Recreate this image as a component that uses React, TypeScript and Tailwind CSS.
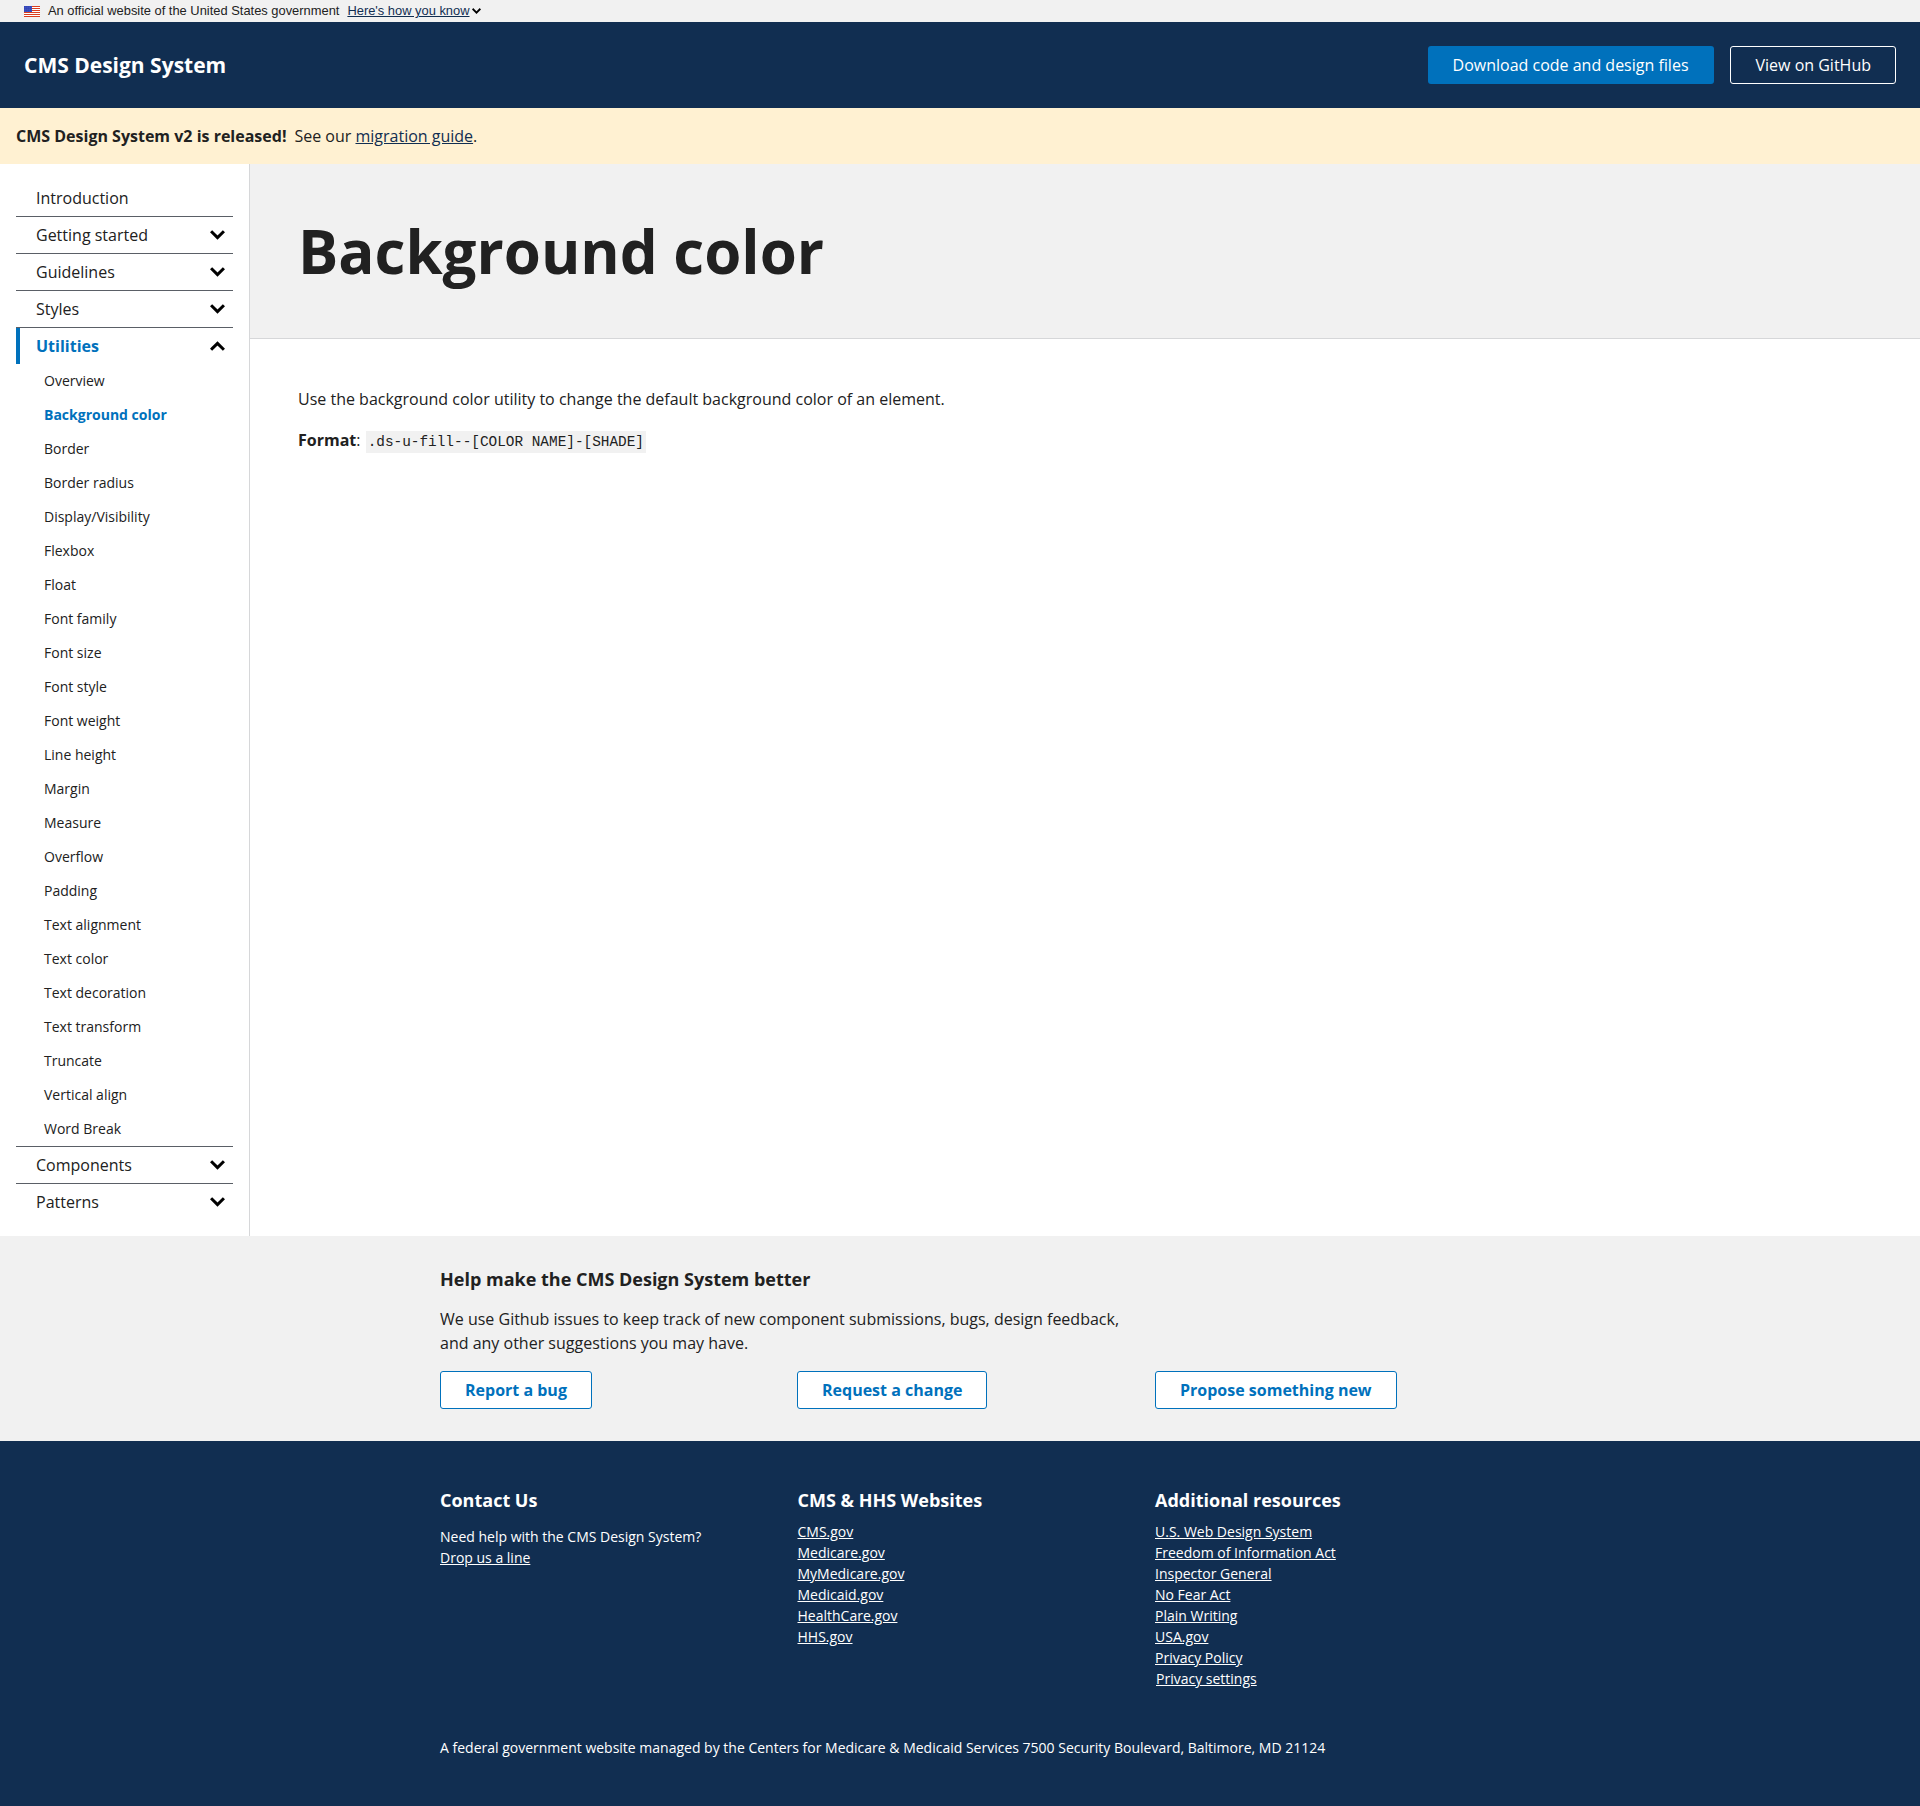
import React from "react";

const subItems = ["Overview","Background color","Border","Border radius","Display/Visibility","Flexbox","Float","Font family","Font size","Font style","Font weight","Line height","Margin","Measure","Overflow","Padding","Text alignment","Text color","Text decoration","Text transform","Truncate","Vertical align","Word Break"];

function Chevron({ up = false, className = "" }: { up?: boolean; className?: string }) {
  return (
    <svg viewBox="0 0 14 9" className={className} fill="none" stroke="currentColor" strokeWidth="2.8" strokeLinecap="square">
      {up ? <path d="M2 7l5-5 5 5" /> : <path d="M2 2l5 5 5-5" />}
    </svg>
  );
}

function Flag() {
  return (
    <svg viewBox="0 0 16 11" className="w-4 h-[11px]">
      <rect width="16" height="11" fill="#fff" />
      {[0, 2, 4, 6, 8, 10].map((y) => (
        <rect key={y} y={y} width="16" height="1" fill="#db3e1f" />
      ))}
      <rect width="8" height="6" fill="#1e33b1" />
      {[1, 3, 5].map((y) => [1, 3, 5, 7].map((x) => <rect key={`${x}-${y}`} x={x - 0.3} y={y - 0.3} width="0.7" height="0.7" fill="#fff" />))}
    </svg>
  );
}

function NavRow({ label, open, active, border = true }: { label: string; open?: boolean; active?: boolean; border?: boolean }) {
  return (
    <div className={`h-[37px] flex items-center justify-between pr-[8px] ${border ? "border-t border-[#5a5f66]" : ""}`}>
      <span className={`flex h-full items-center text-[16px] ${active ? "border-l-4 border-[#0071bc] pl-4 font-bold text-[#0071bc]" : "pl-5 text-[#212121]"}`}>{label}</span>
      {open !== undefined && <Chevron up={open} className="w-[15px] h-[10px] text-black" />}
    </div>
  );
}

function OutlineBtn({ children }: { children: React.ReactNode }) {
  return (
    <a className="inline-flex items-center h-[38px] px-[24px] border border-[#0071bc] rounded-[3px] bg-white text-[#0071bc] font-bold text-[16px]">{children}</a>
  );
}

const cms = ["CMS.gov","Medicare.gov","MyMedicare.gov","Medicaid.gov","HealthCare.gov","HHS.gov"];
const res = ["U.S. Web Design System","Freedom of Information Act","Inspector General","No Fear Act","Plain Writing","USA.gov","Privacy Policy"];

export default function App() {
  return (
    <div className="w-[1920px] h-[1806px] flex flex-col font-['Open_Sans',sans-serif] text-[#212121] bg-white overflow-hidden">
      <div className="h-[22px] bg-[#f1f1f1] flex items-center pl-6 gap-2 font-['Liberation_Sans',sans-serif] text-[12.9px]">
        <Flag />
        <span className="text-[#212121]">An official website of the United States government</span>
        <span className="flex items-center">
          <span className="underline text-[#112e51]">Here's how you know</span>
          <Chevron className="w-[9px] h-[6px] ml-[2px] text-black" />
        </span>
      </div>

      <header className="h-[86px] bg-[#112e51] flex items-center justify-between pl-6 pr-6">
        <span className="text-white font-bold text-[21px] pt-[2px]">CMS Design System</span>
        <div className="flex gap-4">
          <a className="h-[38px] px-[25px] inline-flex items-center rounded-[3px] bg-[#0071bc] text-white text-[16px] font-normal">Download code and design files</a>
          <a className="h-[38px] pl-[25px] pr-[24px] inline-flex items-center rounded-[3px] border border-white text-white text-[16px] font-normal">View on GitHub</a>
        </div>
      </header>

      <div className="h-[56px] bg-[#fff1d2] flex items-center pl-4 text-[16px]">
        <b className="font-bold">CMS Design System v2 is released!</b>
        <span className="ml-2">See our <a className="underline text-[#112e51]">migration guide</a>.</span>
      </div>

      <div className="flex h-[1072px]">
        <aside className="w-[250px] shrink-0 border-r border-[#d6d7d9] pl-4 pr-4 pt-[15px]">
          <NavRow label="Introduction" border={false} />
          <NavRow label="Getting started" open={false} />
          <NavRow label="Guidelines" open={false} />
          <NavRow label="Styles" open={false} />
          <NavRow label="Utilities" open active />
          <ul className="-mt-px mb-px">
            {subItems.map((s) => (
              <li key={s} className={`h-[34px] flex items-center pl-7 text-[14px] ${s === "Background color" ? "font-bold text-[#0071bc]" : "text-[#212121]"}`}>{s}</li>
            ))}
          </ul>
          <NavRow label="Components" open={false} />
          <NavRow label="Patterns" open={false} />
        </aside>
        <main className="flex-1">
          <div className="h-[175px] bg-[#f1f1f1] border-b border-[#d6d7d9] flex items-center pl-[48px]">
            <h1 className="font-bold text-[60px] leading-none">Background color</h1>
          </div>
          <div className="pl-[48px] pt-[48px] text-[16px]">
            <p className="leading-[24px]">Use the background color utility to change the default background color of an element.</p>
            <p className="mt-[17px] leading-[24px]"><b className="font-bold">Format</b>: <code className="font-['Liberation_Mono',monospace] text-[14.4px] bg-[#f1f1f1] px-[2px] py-[3px] ml-[1px]">.ds-u-fill--[COLOR NAME]-[SHADE]</code></p>
          </div>
        </main>
      </div>

      <section className="h-[205px] bg-[#f1f1f1] pl-[440px] pt-[30px]">
        <h3 className="font-bold text-[18px] leading-[27px]">Help make the CMS Design System better</h3>
        <p className="mt-[14px] text-[16px] leading-[24px]">We use Github issues to keep track of new component submissions, bugs, design feedback,<br />and any other suggestions you may have.</p>
        <div className="mt-[16px] grid grid-cols-[357px_358px_auto]">
          <div><OutlineBtn>Report a bug</OutlineBtn></div>
          <div><OutlineBtn>Request a change</OutlineBtn></div>
          <div><OutlineBtn>Propose something new</OutlineBtn></div>
        </div>
      </section>

      <footer className="flex-1 bg-[#112e51] text-white pl-[440px] pt-[46px] text-[14px]">
        <div className="grid grid-cols-[357.5px_357.5px_auto] h-[250px]">
          <div>
            <h4 className="font-bold text-[18px] leading-[27px]">Contact Us</h4>
            <p className="mt-[12px] leading-[21px]">Need help with the CMS Design System?<br /><a className="underline">Drop us a line</a></p>
          </div>
          <div>
            <h4 className="font-bold text-[18px] leading-[27px]">CMS &amp; HHS Websites</h4>
            <ul className="mt-[7px] leading-[21px]">{cms.map((c) => <li key={c}><a className="underline">{c}</a></li>)}</ul>
          </div>
          <div>
            <h4 className="font-bold text-[18px] leading-[27px]">Additional resources</h4>
            <ul className="mt-[7px] leading-[21px]">
              {res.map((c) => <li key={c}><a className="underline">{c}</a></li>)}
              <li className="pl-px"><a className="underline">Privacy settings</a></li>
            </ul>
          </div>
        </div>
        <p className="leading-[21px]">A federal government website managed by the Centers for Medicare &amp; Medicaid Services 7500 Security Boulevard, Baltimore, MD 21124</p>
      </footer>
    </div>
  );
}
